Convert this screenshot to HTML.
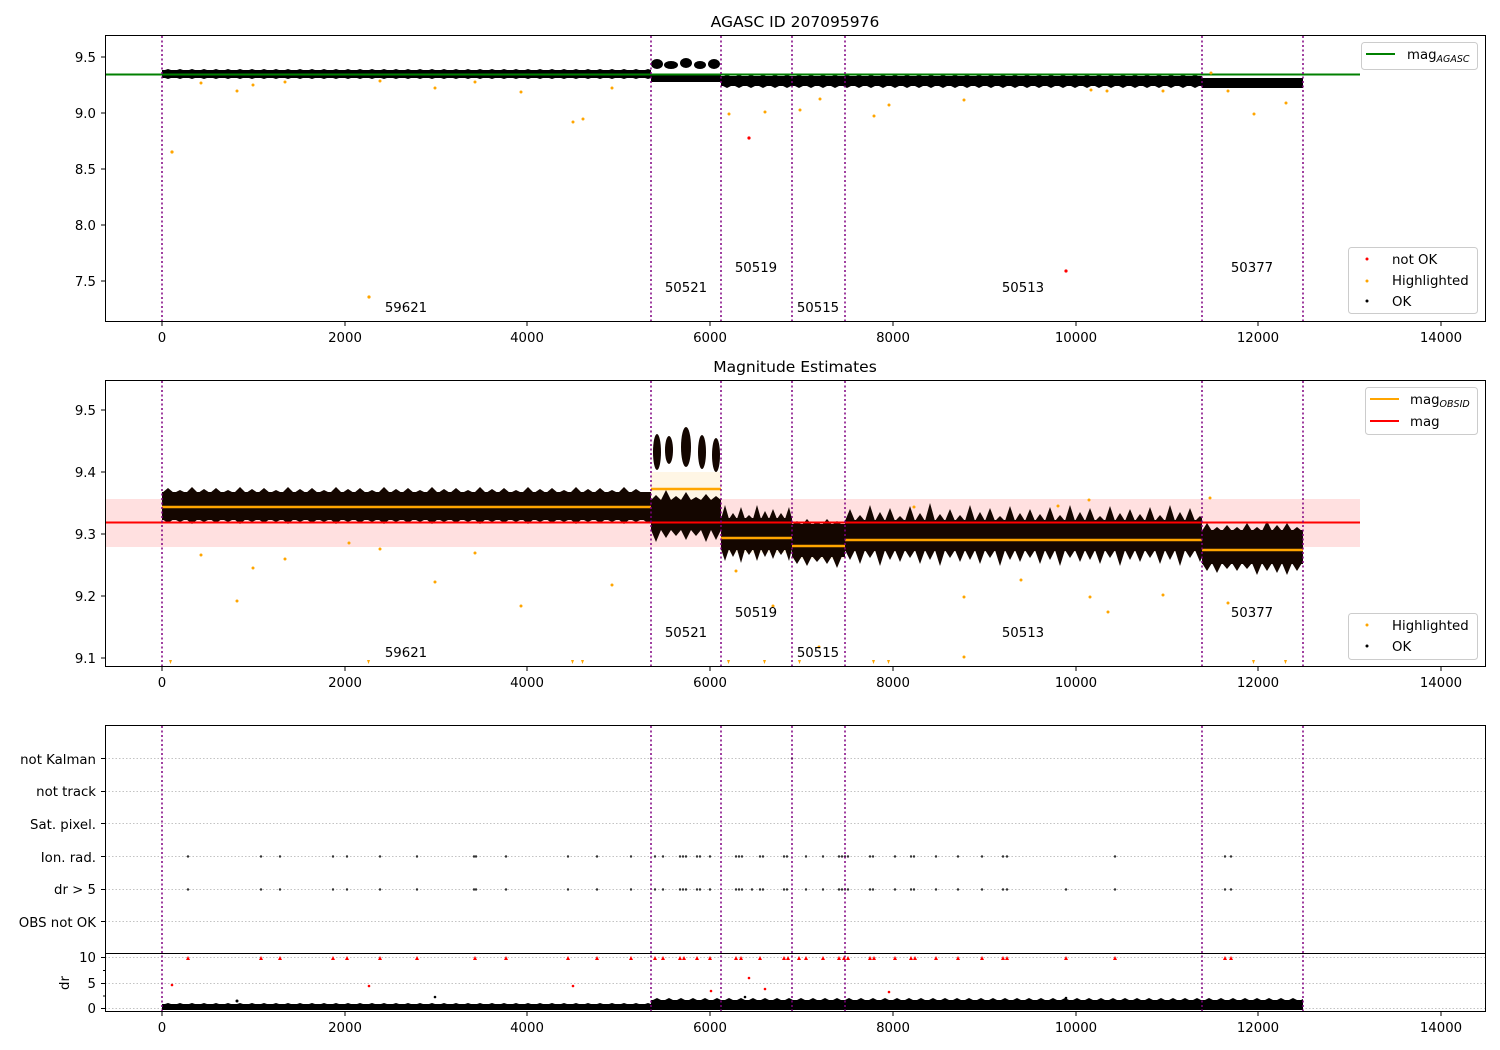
<!DOCTYPE html>
<html><head><meta charset="utf-8"><style>
html,body{margin:0;padding:0;background:#fff;}
svg{display:block;font-family:"DejaVu Sans","Liberation Sans",sans-serif;}
</style></head><body>
<svg width="1500" height="1050" viewBox="0 0 1500 1050" xmlns="http://www.w3.org/2000/svg">
<defs>
<clipPath id="c1"><rect x="162" y="0" width="489" height="1050"/></clipPath>
<clipPath id="c3"><rect x="721" y="0" width="71" height="1050"/></clipPath>
<clipPath id="c5"><rect x="845" y="0" width="357" height="1050"/></clipPath>
<clipPath id="c6"><rect x="1202" y="0" width="101" height="1050"/></clipPath>
<clipPath id="cA"><rect x="721" y="0" width="481" height="1050"/></clipPath>
<clipPath id="cB"><rect x="651" y="0" width="652" height="1050"/></clipPath>
</defs>
<rect width="1500" height="1050" fill="#fff"/>
<!-- ============ PANEL 1 ============ -->
<text x="795" y="27" font-size="15.5" text-anchor="middle">AGASC ID 207095976</text>
<g fill="#000">
<rect x="162" y="70" width="489" height="8"/>
<g clip-path="url(#c1)">
<path d="M162,71 l6,-2 l6,2 l6,-2 l6,2 l6,-2 l6,2 l6,-2 l6,2 l6,-2 l6,2 l6,-2 l6,2 l6,-2 l6,2 l6,-2 l6,2 l6,-2 l6,2 l6,-2 l6,2 l6,-2 l6,2 l6,-2 l6,2 l6,-2 l6,2 l6,-2 l6,2 l6,-2 l6,2 l6,-2 l6,2 l6,-2 l6,2 l6,-2 l6,2 l6,-2 l6,2 l6,-2 l6,2 l6,-2 l6,2 l6,-2 l6,2 l6,-2 l6,2 l6,-2 l6,2 l6,-2 l6,2 l6,-2 l6,2 l6,-2 l6,2 l6,-2 l6,2 l6,-2 l6,2 l6,-2 l6,2 l6,-2 l6,2 l6,-2 l6,2 l6,-2 l6,2 l6,-2 l6,2 l6,-2 l6,2 l6,-2 l6,2 l6,-2 l6,2 l6,-2 l6,2 l6,-2 l6,2 l6,-2 l6,2 l6,-2 l6,2 l6,-2 l6,2 L651,71 Z"/>
<path d="M162,77 l6,2 l6,-2 l6,2 l6,-2 l6,2 l6,-2 l6,2 l6,-2 l6,2 l6,-2 l6,2 l6,-2 l6,2 l6,-2 l6,2 l6,-2 l6,2 l6,-2 l6,2 l6,-2 l6,2 l6,-2 l6,2 l6,-2 l6,2 l6,-2 l6,2 l6,-2 l6,2 l6,-2 l6,2 l6,-2 l6,2 l6,-2 l6,2 l6,-2 l6,2 l6,-2 l6,2 l6,-2 l6,2 l6,-2 l6,2 l6,-2 l6,2 l6,-2 l6,2 l6,-2 l6,2 l6,-2 l6,2 l6,-2 l6,2 l6,-2 l6,2 l6,-2 l6,2 l6,-2 l6,2 l6,-2 l6,2 l6,-2 l6,2 l6,-2 l6,2 l6,-2 l6,2 l6,-2 l6,2 l6,-2 l6,2 l6,-2 l6,2 l6,-2 l6,2 l6,-2 l6,2 l6,-2 l6,2 l6,-2 l6,2 l6,-2 l6,2 l6,-2 L651,77 Z"/>
</g>
<ellipse cx="657" cy="64" rx="6" ry="5"/><ellipse cx="671" cy="65" rx="7" ry="4"/><ellipse cx="686" cy="63" rx="6" ry="5"/><ellipse cx="700" cy="65" rx="6" ry="4"/><ellipse cx="714" cy="64" rx="6" ry="5"/>
<rect x="651" y="74" width="70" height="8"/>
<rect x="721" y="76" width="481" height="10"/>
<g clip-path="url(#cA)">
<path d="M721,77 l6,-2 l6,2 l6,-2 l6,2 l6,-2 l6,2 l6,-2 l6,2 l6,-2 l6,2 l6,-2 l6,2 l6,-2 l6,2 l6,-2 l6,2 l6,-2 l6,2 l6,-2 l6,2 l6,-2 l6,2 l6,-2 l6,2 l6,-2 l6,2 l6,-2 l6,2 l6,-2 l6,2 l6,-2 l6,2 l6,-2 l6,2 l6,-2 l6,2 l6,-2 l6,2 l6,-2 l6,2 l6,-2 l6,2 l6,-2 l6,2 l6,-2 l6,2 l6,-2 l6,2 l6,-2 l6,2 l6,-2 l6,2 l6,-2 l6,2 l6,-2 l6,2 l6,-2 l6,2 l6,-2 l6,2 l6,-2 l6,2 l6,-2 l6,2 l6,-2 l6,2 l6,-2 l6,2 l6,-2 l6,2 l6,-2 l6,2 l6,-2 l6,2 l6,-2 l6,2 l6,-2 l6,2 l6,-2 l6,2 l6,-2 l6,2 l6,-2 l6,2 l6,-2 l6,2 L1202,77 Z"/>
<path d="M721,85 l6,3 l6,-3 l6,3 l6,-3 l6,3 l6,-3 l6,3 l6,-3 l6,3 l6,-3 l6,3 l6,-3 l6,3 l6,-3 l6,3 l6,-3 l6,3 l6,-3 l6,3 l6,-3 l6,3 l6,-3 l6,3 l6,-3 l6,3 l6,-3 l6,3 l6,-3 l6,3 l6,-3 l6,3 l6,-3 l6,3 l6,-3 l6,3 l6,-3 l6,3 l6,-3 l6,3 l6,-3 l6,3 l6,-3 l6,3 l6,-3 l6,3 l6,-3 l6,3 l6,-3 l6,3 l6,-3 l6,3 l6,-3 l6,3 l6,-3 l6,3 l6,-3 l6,3 l6,-3 l6,3 l6,-3 l6,3 l6,-3 l6,3 l6,-3 l6,3 l6,-3 l6,3 l6,-3 l6,3 l6,-3 l6,3 l6,-3 l6,3 l6,-3 l6,3 l6,-3 l6,3 l6,-3 l6,3 l6,-3 l6,3 l6,-3 L1202,85 Z"/>
</g>
<rect x="1202" y="78" width="101" height="10"/>
</g>
<line x1="105" y1="74.5" x2="1360" y2="74.5" stroke="#008000" stroke-width="2"/>
<g fill="#ffa500">
<circle cx="172" cy="152" r="1.6"/><circle cx="201" cy="83" r="1.5"/><circle cx="237" cy="91" r="1.5"/><circle cx="253" cy="85" r="1.5"/><circle cx="285" cy="82" r="1.5"/><circle cx="369" cy="297" r="1.6"/><circle cx="380" cy="81" r="1.5"/><circle cx="435" cy="88" r="1.5"/><circle cx="475" cy="82" r="1.5"/><circle cx="521" cy="92" r="1.5"/><circle cx="573" cy="122" r="1.5"/><circle cx="583" cy="119" r="1.5"/><circle cx="612" cy="88" r="1.5"/><circle cx="729" cy="114" r="1.5"/><circle cx="765" cy="112" r="1.5"/><circle cx="800" cy="110" r="1.5"/><circle cx="820" cy="99" r="1.5"/><circle cx="874" cy="116" r="1.5"/><circle cx="889" cy="105" r="1.5"/><circle cx="964" cy="100" r="1.5"/><circle cx="1107" cy="91" r="1.5"/><circle cx="1163" cy="91" r="1.5"/><circle cx="1228" cy="91" r="1.5"/><circle cx="1254" cy="114" r="1.5"/><circle cx="1286" cy="103" r="1.5"/><circle cx="1211" cy="73" r="1.5"/><circle cx="1091" cy="90" r="1.5"/>
</g>
<g fill="#ff0000"><circle cx="749" cy="138" r="1.6"/><circle cx="1066" cy="271" r="1.6"/></g>
<g stroke="#800080" stroke-width="1.5" stroke-dasharray="2,2.5">
<line x1="162" y1="36" x2="162" y2="321"/><line x1="651" y1="36" x2="651" y2="321"/><line x1="721" y1="36" x2="721" y2="321"/><line x1="792" y1="36" x2="792" y2="321"/><line x1="845" y1="36" x2="845" y2="321"/><line x1="1202" y1="36" x2="1202" y2="321"/><line x1="1303" y1="36" x2="1303" y2="321"/>
</g>
<g font-size="13.3" text-anchor="middle">
<text x="406" y="312">59621</text><text x="686" y="292">50521</text><text x="756" y="272">50519</text><text x="818" y="312">50515</text><text x="1023" y="292">50513</text><text x="1252" y="272">50377</text>
</g>
<rect x="105.5" y="35.5" width="1380" height="286" fill="none" stroke="#000" stroke-width="1"/>
<g stroke="#000"><line x1="101" y1="57" x2="105" y2="57"/><line x1="101" y1="113" x2="105" y2="113"/><line x1="101" y1="169" x2="105" y2="169"/><line x1="101" y1="225" x2="105" y2="225"/><line x1="101" y1="281" x2="105" y2="281"/>
<line x1="162" y1="322" x2="162" y2="326"/><line x1="345" y1="322" x2="345" y2="326"/><line x1="527" y1="322" x2="527" y2="326"/><line x1="710" y1="322" x2="710" y2="326"/><line x1="893" y1="322" x2="893" y2="326"/><line x1="1076" y1="322" x2="1076" y2="326"/><line x1="1258" y1="322" x2="1258" y2="326"/><line x1="1441" y1="322" x2="1441" y2="326"/></g>
<g font-size="13.3" text-anchor="end"><text x="96" y="62">9.5</text><text x="96" y="118">9.0</text><text x="96" y="174">8.5</text><text x="96" y="230">8.0</text><text x="96" y="286">7.5</text></g>
<g font-size="13.3" text-anchor="middle"><text x="162" y="342">0</text><text x="345" y="342">2000</text><text x="527" y="342">4000</text><text x="710" y="342">6000</text><text x="893" y="342">8000</text><text x="1076" y="342">10000</text><text x="1258" y="342">12000</text><text x="1441" y="342">14000</text></g>
<rect x="1361.5" y="42.5" width="116" height="27" rx="3" fill="#fff" fill-opacity="0.8" stroke="#ccc"/>
<line x1="1366" y1="54" x2="1395" y2="54" stroke="#008000" stroke-width="2"/>
<text x="1407" y="59" font-size="13.3">mag<tspan font-size="9.5" font-style="italic" dy="3">AGASC</tspan></text>
<rect x="1348.5" y="247.5" width="129" height="66" rx="3" fill="#fff" fill-opacity="0.8" stroke="#ccc"/>
<circle cx="1367" cy="259" r="1.5" fill="#ff0000"/><circle cx="1367" cy="281" r="1.5" fill="#ffa500"/><circle cx="1367" cy="301" r="1.5" fill="#000"/>
<g font-size="13.3"><text x="1392" y="264">not OK</text><text x="1392" y="285">Highlighted</text><text x="1392" y="306">OK</text></g>

<!-- ============ PANEL 2 ============ -->
<text x="795" y="372" font-size="15.5" text-anchor="middle">Magnitude Estimates</text>
<rect x="105" y="499" width="1255" height="48" fill="#ff0000" fill-opacity="0.12"/>
<g fill="#ffa500" fill-opacity="0.1">
<rect x="162" y="495" width="489" height="25"/><rect x="651" y="472" width="70" height="36"/><rect x="721" y="525" width="71" height="28"/><rect x="792" y="535" width="53" height="24"/><rect x="845" y="528" width="357" height="24"/><rect x="1202" y="540" width="101" height="22"/>
</g>
<g fill="#140600">
<rect x="162" y="492" width="489" height="28"/>
<g clip-path="url(#c1)">
<path d="M162,493 l6,-5 l6,5 l6,-3 l6,3 l6,-6 l6,6 l6,-4 l6,4 l6,-5 l6,5 l6,-3 l6,3 l6,-6 l6,6 l6,-4 l6,4 l6,-5 l6,5 l6,-3 l6,3 l6,-6 l6,6 l6,-4 l6,4 l6,-5 l6,5 l6,-3 l6,3 l6,-6 l6,6 l6,-4 l6,4 l6,-5 l6,5 l6,-3 l6,3 l6,-6 l6,6 l6,-4 l6,4 l6,-5 l6,5 l6,-3 l6,3 l6,-6 l6,6 l6,-4 l6,4 l6,-5 l6,5 l6,-3 l6,3 l6,-6 l6,6 l6,-4 l6,4 l6,-5 l6,5 l6,-3 l6,3 l6,-6 l6,6 l6,-4 l6,4 l6,-5 l6,5 l6,-3 l6,3 l6,-6 l6,6 l6,-4 l6,4 l6,-5 l6,5 l6,-3 l6,3 l6,-6 l6,6 l6,-4 l6,4 L651,493 Z"/>
<path d="M162,519 l6,4 l6,-4 l6,3 l6,-3 l6,5 l6,-5 l6,3 l6,-3 l6,4 l6,-4 l6,3 l6,-3 l6,5 l6,-5 l6,3 l6,-3 l6,4 l6,-4 l6,3 l6,-3 l6,5 l6,-5 l6,3 l6,-3 l6,4 l6,-4 l6,3 l6,-3 l6,5 l6,-5 l6,3 l6,-3 l6,4 l6,-4 l6,3 l6,-3 l6,5 l6,-5 l6,3 l6,-3 l6,4 l6,-4 l6,3 l6,-3 l6,5 l6,-5 l6,3 l6,-3 l6,4 l6,-4 l6,3 l6,-3 l6,5 l6,-5 l6,3 l6,-3 l6,4 l6,-4 l6,3 l6,-3 l6,5 l6,-5 l6,3 l6,-3 l6,4 l6,-4 l6,3 l6,-3 l6,5 l6,-5 l6,3 l6,-3 l6,4 l6,-4 l6,3 l6,-3 l6,5 l6,-5 l6,3 l6,-3 l6,4 l6,-4 L651,519 Z"/>
</g>
<ellipse cx="657" cy="452" rx="4" ry="18"/><ellipse cx="669" cy="450" rx="4" ry="14"/><ellipse cx="686" cy="447" rx="5" ry="20"/><ellipse cx="702" cy="452" rx="4" ry="17"/><ellipse cx="716" cy="455" rx="4" ry="17"/>
<path d="M651,500 l5,-5 l5,5 l5,-10 l5,10 l5,-4 l5,4 l5,-8 l5,8 l5,-3 l5,3 l5,-6 l5,6 l5,-4 L721,500 V530 l-5,10 l-5,-10 l-5,12 l-5,-12 l-5,6 l-5,-6 l-5,10 l-5,-10 l-5,6 l-5,-6 l-5,8 l-5,-8 l-5,12 L651,530 Z"/>
<rect x="721" y="518" width="71" height="32"/>
<g clip-path="url(#c3)">
<path d="M721,519 l4,-14 l4,14 l4,-6 l4,6 l4,-12 l4,12 l4,-4 l4,4 l4,-14 l4,14 l4,-8 l4,8 l4,-10 l4,10 l4,-6 l4,6 l4,-12 L792,519 Z"/>
<path d="M721,549 l4,12 l4,-12 l4,8 l4,-8 l4,14 l4,-14 l4,6 l4,-6 l4,12 l4,-12 l4,8 l4,-8 l4,10 l4,-10 l4,6 l4,-6 l4,12 L792,549 Z"/>
</g>
<rect x="792" y="524" width="53" height="33"/>
<path d="M792,525 l5,-4 l5,4 l5,-6 l5,6 l5,-3 l5,3 l5,-6 l5,6 l5,-4 l5,4 L845,525 Z"/>
<path d="M792,556 l5,8 l5,-8 l5,10 l5,-10 l5,6 l5,-6 l5,8 l5,-8 l5,12 l5,-12 L845,556 Z"/>
<rect x="845" y="520" width="357" height="31"/>
<g clip-path="url(#c5)">
<path d="M845,521 l5,-12 l5,12 l5,-6 l5,6 l5,-16 l5,16 l5,-9 l5,9 l5,-13 l5,13 l5,-5 l5,5 l5,-15 l5,15 l5,-8 l5,8 l5,-18 l5,18 l5,-7 l5,7 l5,-12 l5,12 l5,-6 l5,6 l5,-16 l5,16 l5,-9 l5,9 l5,-13 l5,13 l5,-5 l5,5 l5,-15 l5,15 l5,-8 l5,8 l5,-12 l5,12 l5,-7 l5,7 l5,-14 l5,14 l5,-6 l5,6 l5,-16 l5,16 l5,-9 l5,9 l5,-13 l5,13 l5,-5 l5,5 l5,-15 l5,15 l5,-8 l5,8 l5,-12 l5,12 l5,-7 l5,7 l5,-14 l5,14 l5,-6 l5,6 l5,-16 l5,16 l5,-9 l5,9 l5,-13 l5,13 l5,-5 l5,5 l5,-18 l5,18 L1202,521 Z"/>
<path d="M845,550 l5,10 l5,-10 l5,14 l5,-14 l5,8 l5,-8 l5,16 l5,-16 l5,10 l5,-10 l5,12 l5,-12 l5,8 l5,-8 l5,14 l5,-14 l5,10 l5,-10 l5,16 l5,-16 l5,8 l5,-8 l5,12 l5,-12 l5,10 l5,-10 l5,14 l5,-14 l5,8 l5,-8 l5,16 l5,-16 l5,10 l5,-10 l5,12 l5,-12 l5,8 l5,-8 l5,14 l5,-14 l5,10 l5,-10 l5,16 l5,-16 l5,8 l5,-8 l5,12 l5,-12 l5,10 l5,-10 l5,14 l5,-14 l5,8 l5,-8 l5,16 l5,-16 l5,10 l5,-10 l5,12 l5,-12 l5,8 l5,-8 l5,14 l5,-14 l5,10 l5,-10 l5,16 l5,-16 l5,8 l5,-8 l5,12 l5,-12 L1202,550 Z"/>
</g>
<rect x="1202" y="530" width="101" height="34"/>
<g clip-path="url(#c6)">
<path d="M1202,531 l5,-8 l5,8 l5,-4 l5,4 l5,-6 l5,6 l5,-4 l5,4 l5,-8 l5,8 l5,-4 l5,4 l5,-10 l5,10 l5,-6 l5,6 l5,-8 l5,8 l5,-4 l5,4 L1303,531 Z"/>
<path d="M1202,563 l5,8 l5,-8 l5,10 l5,-10 l5,6 l5,-6 l5,8 l5,-8 l5,6 l5,-6 l5,12 l5,-12 l5,8 l5,-8 l5,10 l5,-10 l5,12 l5,-12 l5,8 l5,-8 L1303,563 Z"/>
</g>
</g>
<g stroke="#ffa500" stroke-width="2.5">
<line x1="162" y1="507" x2="651" y2="507"/><line x1="651" y1="489" x2="721" y2="489"/><line x1="721" y1="538" x2="792" y2="538"/><line x1="792" y1="546" x2="845" y2="546"/><line x1="845" y1="540" x2="1202" y2="540"/><line x1="1202" y1="550" x2="1303" y2="550"/>
</g>
<line x1="105" y1="522.5" x2="1360" y2="522.5" stroke="#ff0000" stroke-width="2"/>
<g fill="#ffa500">
<circle cx="201" cy="555" r="1.5"/><circle cx="237" cy="601" r="1.5"/><circle cx="253" cy="568" r="1.5"/><circle cx="285" cy="559" r="1.5"/><circle cx="349" cy="543" r="1.5"/><circle cx="380" cy="549" r="1.5"/><circle cx="435" cy="582" r="1.5"/><circle cx="475" cy="553" r="1.5"/><circle cx="521" cy="606" r="1.5"/><circle cx="612" cy="585" r="1.5"/><circle cx="736" cy="571" r="1.5"/><circle cx="773" cy="606" r="1.5"/><circle cx="819" cy="647" r="1.5"/><circle cx="964" cy="657" r="1.5"/><circle cx="964" cy="597" r="1.5"/><circle cx="1021" cy="580" r="1.5"/><circle cx="1090" cy="597" r="1.5"/><circle cx="1108" cy="612" r="1.5"/><circle cx="1163" cy="595" r="1.5"/><circle cx="1228" cy="603" r="1.5"/><circle cx="914" cy="507" r="1.5"/><circle cx="1058" cy="506" r="1.5"/><circle cx="1089" cy="500" r="1.5"/><circle cx="1210" cy="498" r="1.5"/>
</g>
<g fill="#ffa500">
<path d="M169,660 l3,0 l-1.5,4 Z"/><path d="M367,660 l3,0 l-1.5,4 Z"/><path d="M571,660 l3,0 l-1.5,4 Z"/><path d="M581,660 l3,0 l-1.5,4 Z"/><path d="M727,660 l3,0 l-1.5,4 Z"/><path d="M763,660 l3,0 l-1.5,4 Z"/><path d="M798,660 l3,0 l-1.5,4 Z"/><path d="M872,660 l3,0 l-1.5,4 Z"/><path d="M887,660 l3,0 l-1.5,4 Z"/><path d="M1252,660 l3,0 l-1.5,4 Z"/><path d="M1284,660 l3,0 l-1.5,4 Z"/>
</g>
<g stroke="#800080" stroke-width="1.5" stroke-dasharray="2,2.5">
<line x1="162" y1="381" x2="162" y2="666"/><line x1="651" y1="381" x2="651" y2="666"/><line x1="721" y1="381" x2="721" y2="666"/><line x1="792" y1="381" x2="792" y2="666"/><line x1="845" y1="381" x2="845" y2="666"/><line x1="1202" y1="381" x2="1202" y2="666"/><line x1="1303" y1="381" x2="1303" y2="666"/>
</g>
<g font-size="13.3" text-anchor="middle">
<text x="406" y="657">59621</text><text x="686" y="637">50521</text><text x="756" y="617">50519</text><text x="818" y="657">50515</text><text x="1023" y="637">50513</text><text x="1252" y="617">50377</text>
</g>
<rect x="105.5" y="380.5" width="1380" height="286" fill="none" stroke="#000"/>
<g stroke="#000"><line x1="101" y1="410" x2="105" y2="410"/><line x1="101" y1="472" x2="105" y2="472"/><line x1="101" y1="534" x2="105" y2="534"/><line x1="101" y1="596" x2="105" y2="596"/><line x1="101" y1="658" x2="105" y2="658"/>
<line x1="162" y1="667" x2="162" y2="671"/><line x1="345" y1="667" x2="345" y2="671"/><line x1="527" y1="667" x2="527" y2="671"/><line x1="710" y1="667" x2="710" y2="671"/><line x1="893" y1="667" x2="893" y2="671"/><line x1="1076" y1="667" x2="1076" y2="671"/><line x1="1258" y1="667" x2="1258" y2="671"/><line x1="1441" y1="667" x2="1441" y2="671"/></g>
<g font-size="13.3" text-anchor="end"><text x="96" y="415">9.5</text><text x="96" y="477">9.4</text><text x="96" y="539">9.3</text><text x="96" y="601">9.2</text><text x="96" y="663">9.1</text></g>
<g font-size="13.3" text-anchor="middle"><text x="162" y="687">0</text><text x="345" y="687">2000</text><text x="527" y="687">4000</text><text x="710" y="687">6000</text><text x="893" y="687">8000</text><text x="1076" y="687">10000</text><text x="1258" y="687">12000</text><text x="1441" y="687">14000</text></g>
<rect x="1365.5" y="387.5" width="112" height="47" rx="3" fill="#fff" fill-opacity="0.8" stroke="#ccc"/>
<line x1="1370" y1="399" x2="1399" y2="399" stroke="#ffa500" stroke-width="2"/>
<line x1="1370" y1="421" x2="1399" y2="421" stroke="#ff0000" stroke-width="2"/>
<text x="1410" y="404" font-size="13.3">mag<tspan font-size="9.5" font-style="italic" dy="3">OBSID</tspan></text>
<text x="1410" y="426" font-size="13.3">mag</text>
<rect x="1348.5" y="613.5" width="129" height="46" rx="3" fill="#fff" fill-opacity="0.8" stroke="#ccc"/>
<circle cx="1367" cy="625" r="1.5" fill="#ffa500"/><circle cx="1367" cy="646" r="1.5" fill="#000"/>
<g font-size="13.3"><text x="1392" y="630">Highlighted</text><text x="1392" y="651">OK</text></g>

<!-- ============ PANEL 3 ============ -->
<g stroke="#b0b0b0" stroke-dasharray="1.5,2" stroke-width="0.8">
<line x1="105" y1="758.5" x2="1485" y2="758.5"/><line x1="105" y1="791.5" x2="1485" y2="791.5"/><line x1="105" y1="823.5" x2="1485" y2="823.5"/><line x1="105" y1="856.5" x2="1485" y2="856.5"/><line x1="105" y1="889.5" x2="1485" y2="889.5"/><line x1="105" y1="921.5" x2="1485" y2="921.5"/>
<line x1="105" y1="957.5" x2="1485" y2="957.5"/><line x1="105" y1="983.5" x2="1485" y2="983.5"/><line x1="105" y1="1008.5" x2="1485" y2="1008.5"/>
</g>
<g fill="#333">
<circle cx="188" cy="856.5" r="1.2"/><circle cx="261" cy="856.5" r="1.2"/><circle cx="280" cy="856.5" r="1.2"/><circle cx="333" cy="856.5" r="1.2"/><circle cx="347" cy="856.5" r="1.2"/><circle cx="380" cy="856.5" r="1.2"/><circle cx="417" cy="856.5" r="1.2"/><circle cx="474" cy="856.5" r="1.2"/><circle cx="476" cy="856.5" r="1.2"/><circle cx="506" cy="856.5" r="1.2"/><circle cx="568" cy="856.5" r="1.2"/><circle cx="597" cy="856.5" r="1.2"/><circle cx="631" cy="856.5" r="1.2"/><circle cx="655" cy="856.5" r="1.2"/><circle cx="663" cy="856.5" r="1.2"/><circle cx="680" cy="856.5" r="1.2"/><circle cx="683" cy="856.5" r="1.2"/><circle cx="686" cy="856.5" r="1.2"/><circle cx="697" cy="856.5" r="1.2"/><circle cx="700" cy="856.5" r="1.2"/><circle cx="710" cy="856.5" r="1.2"/><circle cx="736" cy="856.5" r="1.2"/><circle cx="739" cy="856.5" r="1.2"/><circle cx="742" cy="856.5" r="1.2"/><circle cx="760" cy="856.5" r="1.2"/><circle cx="763" cy="856.5" r="1.2"/><circle cx="784" cy="856.5" r="1.2"/><circle cx="787" cy="856.5" r="1.2"/><circle cx="806" cy="856.5" r="1.2"/><circle cx="823" cy="856.5" r="1.2"/><circle cx="839" cy="856.5" r="1.2"/><circle cx="842" cy="856.5" r="1.2"/><circle cx="845" cy="856.5" r="1.2"/><circle cx="848" cy="856.5" r="1.2"/><circle cx="870" cy="856.5" r="1.2"/><circle cx="873" cy="856.5" r="1.2"/><circle cx="895" cy="856.5" r="1.2"/><circle cx="911" cy="856.5" r="1.2"/><circle cx="914" cy="856.5" r="1.2"/><circle cx="936" cy="856.5" r="1.2"/><circle cx="958" cy="856.5" r="1.2"/><circle cx="982" cy="856.5" r="1.2"/><circle cx="1003" cy="856.5" r="1.2"/><circle cx="1007" cy="856.5" r="1.2"/><circle cx="1115" cy="856.5" r="1.2"/><circle cx="1225" cy="856.5" r="1.2"/><circle cx="1231" cy="856.5" r="1.2"/>
<circle cx="188" cy="889.5" r="1.2"/><circle cx="261" cy="889.5" r="1.2"/><circle cx="280" cy="889.5" r="1.2"/><circle cx="333" cy="889.5" r="1.2"/><circle cx="347" cy="889.5" r="1.2"/><circle cx="380" cy="889.5" r="1.2"/><circle cx="417" cy="889.5" r="1.2"/><circle cx="474" cy="889.5" r="1.2"/><circle cx="476" cy="889.5" r="1.2"/><circle cx="506" cy="889.5" r="1.2"/><circle cx="568" cy="889.5" r="1.2"/><circle cx="597" cy="889.5" r="1.2"/><circle cx="631" cy="889.5" r="1.2"/><circle cx="655" cy="889.5" r="1.2"/><circle cx="663" cy="889.5" r="1.2"/><circle cx="680" cy="889.5" r="1.2"/><circle cx="683" cy="889.5" r="1.2"/><circle cx="686" cy="889.5" r="1.2"/><circle cx="697" cy="889.5" r="1.2"/><circle cx="700" cy="889.5" r="1.2"/><circle cx="710" cy="889.5" r="1.2"/><circle cx="736" cy="889.5" r="1.2"/><circle cx="739" cy="889.5" r="1.2"/><circle cx="742" cy="889.5" r="1.2"/><circle cx="752" cy="889.5" r="1.2"/><circle cx="760" cy="889.5" r="1.2"/><circle cx="763" cy="889.5" r="1.2"/><circle cx="784" cy="889.5" r="1.2"/><circle cx="787" cy="889.5" r="1.2"/><circle cx="806" cy="889.5" r="1.2"/><circle cx="823" cy="889.5" r="1.2"/><circle cx="839" cy="889.5" r="1.2"/><circle cx="842" cy="889.5" r="1.2"/><circle cx="845" cy="889.5" r="1.2"/><circle cx="848" cy="889.5" r="1.2"/><circle cx="870" cy="889.5" r="1.2"/><circle cx="873" cy="889.5" r="1.2"/><circle cx="895" cy="889.5" r="1.2"/><circle cx="911" cy="889.5" r="1.2"/><circle cx="914" cy="889.5" r="1.2"/><circle cx="936" cy="889.5" r="1.2"/><circle cx="958" cy="889.5" r="1.2"/><circle cx="982" cy="889.5" r="1.2"/><circle cx="1003" cy="889.5" r="1.2"/><circle cx="1007" cy="889.5" r="1.2"/><circle cx="1066" cy="889.5" r="1.2"/><circle cx="1115" cy="889.5" r="1.2"/><circle cx="1225" cy="889.5" r="1.2"/><circle cx="1231" cy="889.5" r="1.2"/>
<circle cx="792" cy="758.5" r="1.2"/>
</g>
<g fill="#ff0000">
<path d="M186,960 l2,-4 l2,4 Z"/><path d="M259,960 l2,-4 l2,4 Z"/><path d="M278,960 l2,-4 l2,4 Z"/><path d="M331,960 l2,-4 l2,4 Z"/><path d="M345,960 l2,-4 l2,4 Z"/><path d="M378,960 l2,-4 l2,4 Z"/><path d="M415,960 l2,-4 l2,4 Z"/><path d="M473,960 l2,-4 l2,4 Z"/><path d="M504,960 l2,-4 l2,4 Z"/><path d="M566,960 l2,-4 l2,4 Z"/><path d="M595,960 l2,-4 l2,4 Z"/><path d="M629,960 l2,-4 l2,4 Z"/><path d="M653,960 l2,-4 l2,4 Z"/><path d="M661,960 l2,-4 l2,4 Z"/><path d="M678,960 l2,-4 l2,4 Z"/><path d="M682,960 l2,-4 l2,4 Z"/><path d="M695,960 l2,-4 l2,4 Z"/><path d="M708,960 l2,-4 l2,4 Z"/><path d="M734,960 l2,-4 l2,4 Z"/><path d="M739,960 l2,-4 l2,4 Z"/><path d="M758,960 l2,-4 l2,4 Z"/><path d="M782,960 l2,-4 l2,4 Z"/><path d="M786,960 l2,-4 l2,4 Z"/><path d="M797,960 l2,-4 l2,4 Z"/><path d="M804,960 l2,-4 l2,4 Z"/><path d="M821,960 l2,-4 l2,4 Z"/><path d="M837,960 l2,-4 l2,4 Z"/><path d="M842,960 l2,-4 l2,4 Z"/><path d="M846,960 l2,-4 l2,4 Z"/><path d="M868,960 l2,-4 l2,4 Z"/><path d="M872,960 l2,-4 l2,4 Z"/><path d="M893,960 l2,-4 l2,4 Z"/><path d="M909,960 l2,-4 l2,4 Z"/><path d="M913,960 l2,-4 l2,4 Z"/><path d="M934,960 l2,-4 l2,4 Z"/><path d="M956,960 l2,-4 l2,4 Z"/><path d="M980,960 l2,-4 l2,4 Z"/><path d="M1001,960 l2,-4 l2,4 Z"/><path d="M1005,960 l2,-4 l2,4 Z"/><path d="M1064,960 l2,-4 l2,4 Z"/><path d="M1113,960 l2,-4 l2,4 Z"/><path d="M1223,960 l2,-4 l2,4 Z"/><path d="M1229,960 l2,-4 l2,4 Z"/>
<circle cx="172" cy="985" r="1.3"/><circle cx="369" cy="986" r="1.3"/><circle cx="573" cy="986" r="1.3"/><circle cx="711" cy="991" r="1.3"/><circle cx="749" cy="978" r="1.3"/><circle cx="765" cy="989" r="1.3"/><circle cx="889" cy="992" r="1.3"/>
</g>
<g fill="#000">
<rect x="162" y="1004" width="489" height="6"/>
<g clip-path="url(#c1)">
<path d="M162,1005 l6,-2 l6,2 l6,-2 l6,2 l6,-2 l6,2 l6,-2 l6,2 l6,-2 l6,2 l6,-2 l6,2 l6,-2 l6,2 l6,-2 l6,2 l6,-2 l6,2 l6,-2 l6,2 l6,-2 l6,2 l6,-2 l6,2 l6,-2 l6,2 l6,-2 l6,2 l6,-2 l6,2 l6,-2 l6,2 l6,-2 l6,2 l6,-2 l6,2 l6,-2 l6,2 l6,-2 l6,2 l6,-2 l6,2 l6,-2 l6,2 l6,-2 l6,2 l6,-2 l6,2 l6,-2 l6,2 l6,-2 l6,2 l6,-2 l6,2 l6,-2 l6,2 l6,-2 l6,2 l6,-2 l6,2 l6,-2 l6,2 l6,-2 l6,2 l6,-2 l6,2 l6,-2 l6,2 l6,-2 l6,2 l6,-2 l6,2 l6,-2 l6,2 l6,-2 l6,2 l6,-2 l6,2 l6,-2 l6,2 l6,-2 l6,2 l6,-2 l6,2 L651,1005 Z"/>
</g>
<rect x="651" y="1000" width="652" height="10"/>
<g clip-path="url(#cB)">
<path d="M651,1001 l6,-3 l6,3 l6,-3 l6,3 l6,-3 l6,3 l6,-3 l6,3 l6,-3 l6,3 l6,-3 l6,3 l6,-3 l6,3 l6,-3 l6,3 l6,-3 l6,3 l6,-3 l6,3 l6,-3 l6,3 l6,-3 l6,3 l6,-3 l6,3 l6,-3 l6,3 l6,-3 l6,3 l6,-3 l6,3 l6,-3 l6,3 l6,-3 l6,3 l6,-3 l6,3 l6,-3 l6,3 l6,-3 l6,3 l6,-3 l6,3 l6,-3 l6,3 l6,-3 l6,3 l6,-3 l6,3 l6,-3 l6,3 l6,-3 l6,3 l6,-3 l6,3 l6,-3 l6,3 l6,-3 l6,3 l6,-3 l6,3 l6,-3 l6,3 l6,-3 l6,3 l6,-3 l6,3 l6,-3 l6,3 l6,-3 l6,3 l6,-3 l6,3 l6,-3 l6,3 l6,-3 l6,3 l6,-3 l6,3 l6,-3 l6,3 l6,-3 l6,3 l6,-3 l6,3 l6,-3 l6,3 l6,-3 l6,3 l6,-3 l6,3 l6,-3 l6,3 l6,-3 l6,3 l6,-3 l6,3 l6,-3 l6,3 l6,-3 l6,3 l6,-3 l6,3 l6,-3 l6,3 l6,-3 l6,3 l6,-3 l6,3 l6,-3 l6,3 l6,-3 l6,3 l6,-3 l6,3 L1303,1001 Z"/>
</g>
<circle cx="237" cy="1001" r="1.5"/><circle cx="435" cy="997" r="1.3"/><circle cx="745" cy="997" r="1.3"/><circle cx="1066" cy="998" r="1.3"/>
</g>
<g stroke="#800080" stroke-width="1.5" stroke-dasharray="2,2.5">
<line x1="162" y1="726" x2="162" y2="1011"/><line x1="651" y1="726" x2="651" y2="1011"/><line x1="721" y1="726" x2="721" y2="1011"/><line x1="792" y1="726" x2="792" y2="1011"/><line x1="845" y1="726" x2="845" y2="1011"/><line x1="1202" y1="726" x2="1202" y2="1011"/><line x1="1303" y1="726" x2="1303" y2="1011"/>
</g>
<rect x="105.5" y="725.5" width="1380" height="228" fill="none" stroke="#000"/>
<rect x="105.5" y="953.5" width="1380" height="58" fill="none" stroke="#000"/>
<g stroke="#000">
<line x1="101" y1="758.5" x2="105" y2="758.5"/><line x1="101" y1="791.5" x2="105" y2="791.5"/><line x1="101" y1="823.5" x2="105" y2="823.5"/><line x1="101" y1="856.5" x2="105" y2="856.5"/><line x1="101" y1="889.5" x2="105" y2="889.5"/><line x1="101" y1="921.5" x2="105" y2="921.5"/>
<line x1="101" y1="957.5" x2="105" y2="957.5"/><line x1="101" y1="983.5" x2="105" y2="983.5"/><line x1="101" y1="1008.5" x2="105" y2="1008.5"/>
<line x1="103" y1="970.5" x2="105" y2="970.5"/><line x1="103" y1="996" x2="105" y2="996"/>
<line x1="162" y1="1012" x2="162" y2="1016"/><line x1="345" y1="1012" x2="345" y2="1016"/><line x1="527" y1="1012" x2="527" y2="1016"/><line x1="710" y1="1012" x2="710" y2="1016"/><line x1="893" y1="1012" x2="893" y2="1016"/><line x1="1076" y1="1012" x2="1076" y2="1016"/><line x1="1258" y1="1012" x2="1258" y2="1016"/><line x1="1441" y1="1012" x2="1441" y2="1016"/>
</g>
<g font-size="13.3" text-anchor="end">
<text x="96" y="764">not Kalman</text><text x="96" y="796">not track</text><text x="96" y="829">Sat. pixel.</text><text x="96" y="862">Ion. rad.</text><text x="96" y="894">dr &gt; 5</text><text x="96" y="927">OBS not OK</text>
<text x="96" y="962">10</text><text x="96" y="988">5</text><text x="96" y="1013">0</text>
</g>
<text x="0" y="0" font-size="13.3" text-anchor="middle" transform="translate(69,983) rotate(-90)">dr</text>
<g font-size="13.3" text-anchor="middle"><text x="162" y="1032">0</text><text x="345" y="1032">2000</text><text x="527" y="1032">4000</text><text x="710" y="1032">6000</text><text x="893" y="1032">8000</text><text x="1076" y="1032">10000</text><text x="1258" y="1032">12000</text><text x="1441" y="1032">14000</text></g>
</svg>
</body></html>
